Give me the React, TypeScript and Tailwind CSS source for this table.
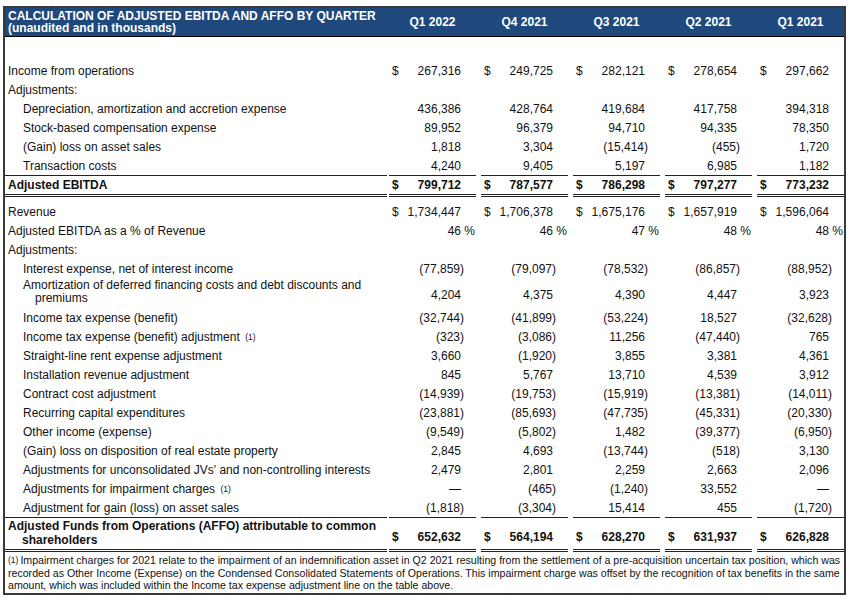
import React from "react";

type Row = {
  label: React.ReactNode;
  vals: string[];
  dollar?: boolean;
  indent?: boolean;
  bold?: boolean;
  pct?: boolean;
  kind?: "normal" | "total" | "amort" | "affo" | "header";
};

const Sup = () => (
  <sup className="text-[8.5px] relative top-[-1px] ml-[2px]">(1)</sup>
);

const COLS = ["Q1 2022", "Q4 2021", "Q3 2021", "Q2 2021", "Q1 2021"];

function ValueCell({
  v,
  dollar,
  bold,
  pct,
  first,
  className,
}: {
  v: string;
  dollar?: boolean;
  bold?: boolean;
  pct?: boolean;
  first?: boolean;
  className?: string;
}) {
  const neg = v.startsWith("(");
  return (
    <div
      className={`${first ? "ml-[2px]" : "ml-[5px]"} w-[87px] shrink-0 flex justify-between ${
        bold ? "font-bold" : ""
      } ${className ?? ""}`}
    >
      <span className="pl-[3px]">{dollar ? "$" : ""}</span>
      <span
        className={`whitespace-nowrap ${
          pct ? "pr-[1px]" : neg ? "pr-[12px]" : "pr-[15px]"
        }`}
      >
        {v}
      </span>
    </div>
  );
}

function DataRow({ row }: { row: Row }) {
  const kind = row.kind ?? "normal";
  const h =
    kind === "amort"
      ? "h-[30px]"
      : kind === "total"
      ? "h-[22px]"
      : kind === "affo"
      ? "h-[35px]"
      : "h-[19px]";
  const cellBorder =
    kind === "total" || kind === "affo"
      ? "border-t border-t-[#222] border-b-[3px] border-b-[#222] border-double"
      : "";
  const align = kind === "amort" || kind === "affo" ? "items-end" : "items-center";
  return (
    <div className={`flex ${h}`}>
      <div
        className={`w-[382px] shrink-0 flex ${align} ${cellBorder} ${
          row.bold ? "font-bold" : ""
        } ${row.indent ? "pl-[18px]" : "pl-[3px]"}`}
      >
        {kind === "amort" ? (
          <div className="leading-[13px] pb-[3px]">
            Amortization of deferred financing costs and debt discounts and
            <br />
            <span className="pl-[12px]">premiums</span>
          </div>
        ) : kind === "affo" ? (
          <div className="leading-[14px] pb-[2px]">
            Adjusted Funds from Operations (AFFO) attributable to common
            <br />
            <span className="pl-[14px]">shareholders</span>
          </div>
        ) : (
          <span className="whitespace-nowrap">{row.label}</span>
        )}
      </div>
      {row.vals.map((v, i) => (
        <ValueCell
          key={i}
          v={v}
          dollar={row.dollar}
          bold={row.bold}
          pct={row.pct}
          first={i === 0}
          className={`${cellBorder} ${
            kind === "amort" ? "items-end pb-[4px]" : kind === "affo" ? "items-end pb-[3px]" : "items-center"
          }`}
        />
      ))}
    </div>
  );
}

const top: Row[] = [
  { label: "Income from operations", vals: ["267,316", "249,725", "282,121", "278,654", "297,662"], dollar: true },
  { label: "Adjustments:", vals: ["", "", "", "", ""] },
  { label: "Depreciation, amortization and accretion expense", indent: true, vals: ["436,386", "428,764", "419,684", "417,758", "394,318"] },
  { label: "Stock-based compensation expense", indent: true, vals: ["89,952", "96,379", "94,710", "94,335", "78,350"] },
  { label: "(Gain) loss on asset sales", indent: true, vals: ["1,818", "3,304", "(15,414)", "(455)", "1,720"] },
  { label: "Transaction costs", indent: true, vals: ["4,240", "9,405", "5,197", "6,985", "1,182"] },
  { label: "Adjusted EBITDA", bold: true, dollar: true, kind: "total", vals: ["799,712", "787,577", "786,298", "797,277", "773,232"] },
];

const bottom: Row[] = [
  { label: "Revenue", dollar: true, vals: ["1,734,447", "1,706,378", "1,675,176", "1,657,919", "1,596,064"] },
  { label: "Adjusted EBITDA as a % of Revenue", pct: true, vals: ["46 %", "46 %", "47 %", "48 %", "48 %"] },
  { label: "Adjustments:", vals: ["", "", "", "", ""] },
  { label: "Interest expense, net of interest income", indent: true, vals: ["(77,859)", "(79,097)", "(78,532)", "(86,857)", "(88,952)"] },
  { label: "", indent: true, kind: "amort", vals: ["4,204", "4,375", "4,390", "4,447", "3,923"] },
  { label: "Income tax expense (benefit)", indent: true, vals: ["(32,744)", "(41,899)", "(53,224)", "18,527", "(32,628)"] },
  { label: <>Income tax expense (benefit) adjustment <Sup /></>, indent: true, vals: ["(323)", "(3,086)", "11,256", "(47,440)", "765"] },
  { label: "Straight-line rent expense adjustment", indent: true, vals: ["3,660", "(1,920)", "3,855", "3,381", "4,361"] },
  { label: "Installation revenue adjustment", indent: true, vals: ["845", "5,767", "13,710", "4,539", "3,912"] },
  { label: "Contract cost adjustment", indent: true, vals: ["(14,939)", "(19,753)", "(15,919)", "(13,381)", "(14,011)"] },
  { label: "Recurring capital expenditures", indent: true, vals: ["(23,881)", "(85,693)", "(47,735)", "(45,331)", "(20,330)"] },
  { label: "Other income (expense)", indent: true, vals: ["(9,549)", "(5,802)", "1,482", "(39,377)", "(6,950)"] },
  { label: "(Gain) loss on disposition of real estate property", indent: true, vals: ["2,845", "4,693", "(13,744)", "(518)", "3,130"] },
  { label: "Adjustments for unconsolidated JVs' and non-controlling interests", indent: true, vals: ["2,479", "2,801", "2,259", "2,663", "2,096"] },
  { label: <>Adjustments for impairment charges <Sup /></>, indent: true, vals: ["\u2014", "(465)", "(1,240)", "33,552", "\u2014"] },
  { label: "Adjustment for gain (loss) on asset sales", indent: true, vals: ["(1,818)", "(3,304)", "15,414", "455", "(1,720)"] },
  { label: "", bold: true, dollar: true, kind: "affo", vals: ["652,632", "564,194", "628,270", "631,937", "626,828"] },
];

export default function App() {
  return (
    <div
      className="w-[850px] h-[599px] bg-white text-[#111] text-[12px] overflow-hidden"
      style={{ fontFamily: '"Liberation Sans", Arial, sans-serif' }}
    >
      <div className="ml-[3px] mt-[6px] w-[843px] border-2 border-[#3a3a3a]">
        {/* Header */}
        <div className="flex h-[29px] bg-[#1f497d] text-white font-bold border-b border-black">
          <div className="w-[382px] shrink-0 pl-[3px] pt-[2px] leading-[12px]">
            <div>CALCULATION OF ADJUSTED EBITDA AND AFFO BY QUARTER</div>
            <div>(unaudited and in thousands)</div>
          </div>
          {COLS.map((c, i) => (
            <div
              key={c}
              className={`${i === 0 ? "ml-[2px]" : "ml-[5px]"} w-[87px] shrink-0 flex items-center justify-center`}
            >
              {c}
            </div>
          ))}
        </div>
        <div className="h-[24px]" />
        {top.map((r, i) => (
          <DataRow key={i} row={r} />
        ))}
        <div className="h-[5px]" />
        {bottom.map((r, i) => (
          <DataRow key={i} row={r} />
        ))}
        <div className="pl-[3px] pt-[2px] pb-[1px] text-[10.6px] leading-[12.5px] whitespace-nowrap">
          <div>
            <sup className="text-[8.5px] relative top-[-1px] mr-[2px]">(1)</sup>
            Impairment charges for 2021 relate to the impairment of an indemnification asset in Q2 2021 resulting from the settlement of a pre-acquisition uncertain tax position, which was
          </div>
          <div>
            recorded as Other Income (Expense) on the Condensed Consolidated Statements of Operations. This impairment charge was offset by the recognition of tax benefits in the same
          </div>
          <div>amount, which was included within the Income tax expense adjustment line on the table above.</div>
        </div>
      </div>
    </div>
  );
}
